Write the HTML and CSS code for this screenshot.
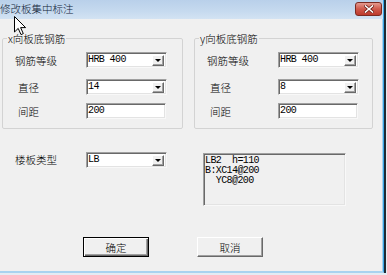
FILE: index.html
```html
<!DOCTYPE html>
<html lang="zh-CN">
<head>
  <meta charset="UTF-8">
  <meta name="viewport" content="width=device-width, initial-scale=1.0">
  <title>修改板集中标注</title>
  <link rel="stylesheet" href="styles.css">
</head>
<body>
  <div class="window">
    <header class="titlebar">
      <span class="title">修改板集中标注</span>
      <button class="close" aria-label="关闭">
        <svg width="10" height="8" viewBox="0 0 10 8">
          <path d="M1.5 1 L8.5 7 M8.5 1 L1.5 7" stroke="#6b1c14" stroke-width="3" stroke-linecap="square"/>
          <path d="M1.5 1 L8.5 7 M8.5 1 L1.5 7" stroke="#fff" stroke-width="1.6" stroke-linecap="square"/>
        </svg>
      </button>
    </header>

    <main class="client">
      <div class="groups">
        <fieldset class="group">
          <legend>x向板底钢筋</legend>
          <div class="row row-first">
            <span class="label">钢筋等级</span>
            <div class="combo"><span class="value">HRB 400</span><i class="drop"></i></div>
          </div>
          <div class="row row-second">
            <span class="label indent">直径</span>
            <div class="combo"><span class="value">14</span><i class="drop"></i></div>
          </div>
          <div class="row row-third">
            <span class="label indent">间距</span>
            <div class="field"><span class="value">200</span></div>
          </div>
        </fieldset>

        <fieldset class="group">
          <legend>y向板底钢筋</legend>
          <div class="row row-first">
            <span class="label">钢筋等级</span>
            <div class="combo"><span class="value">HRB 400</span><i class="drop"></i></div>
          </div>
          <div class="row row-second">
            <span class="label indent">直径</span>
            <div class="combo"><span class="value">8</span><i class="drop"></i></div>
          </div>
          <div class="row row-third">
            <span class="label indent">间距</span>
            <div class="field"><span class="value">200</span></div>
          </div>
        </fieldset>
      </div>

      <div class="slab">
        <span class="label">楼板类型</span>
        <div class="combo"><span class="value">LB</span><i class="drop"></i></div>
        <div class="memo">LB2  h=110
B:XC14@200
  YC8@200</div>
      </div>

      <div class="actions">
        <button class="btn btn-default">确定</button>
        <button class="btn">取消</button>
      </div>
    </main>

    <!-- mouse pointer over the dialog -->
    <svg class="cursor" width="13" height="20" viewBox="0 0 13 20">
      <path d="M0.5 0.5 L0.5 16 L4.2 12.4 L7 18.6 L9.3 17.6 L6.6 11.6 L11.6 11.6 Z" fill="#fff" stroke="#000" stroke-width="1"/>
    </svg>
  </div>
</body>
</html>
```

FILE: styles.css
```css
body {
  margin: 0;
  background-color: #e4ecf3;
  font-family: "Noto Sans CJK SC", "Liberation Sans", sans-serif;
  font-size: 10.5px;
  font-weight: 300;
  color: #000;
}

.window {
  position: relative;
  width: 383px;
  height: 271px;
  background-color: #f0f0f0;
  border-right: 1px solid #3aa6e6;
  border-bottom: 2px solid #a9d3ef;
  box-shadow: inset -1px 0 #a9d3ef, 2px 0 0 #1d2b35;
  display: flex;
  flex-direction: column;
}

/* title bar */
.titlebar {
  height: 19px;
  flex: none;
  display: flex;
  align-items: center;
  justify-content: space-between;
  background: linear-gradient(#b9d0ea, #c6daef 60%, #d3e3f3);
}

.title {
  font-size: 10.5px;
  line-height: 13px;
  color: #10243a;
  margin-top: -2px;
}

.close {
  width: 27px;
  height: 14px;
  margin-right: 1px;
  margin-top: -2px;
  padding: 0;
  border: 1px solid #7c2b22;
  border-radius: 3px;
  background: linear-gradient(#e49a8f, #d0594b 50%, #bc3a2c);
  display: flex;
  align-items: center;
  justify-content: center;
}

/* client area */
.client {
  flex: 1;
  padding: 13px 0 0 2px;
  border-right: 1px solid #a9d3ef;
}

.groups {
  display: flex;
  gap: 11px;
}

.group {
  margin: 0;
  padding: 0 0 9px 12px;
  border: 1px solid #d3d3d3;
  border-radius: 2px;
  width: 179px;
  box-sizing: border-box;
  min-width: 0;
}

.group:first-child {
  width: 181px;
}

.group legend {
  margin-left: -8px;
  padding: 0 1px;
  font-size: 10.5px;
  line-height: 13px;
}

.row {
  display: flex;
  align-items: center;
  height: 16px;
}

.row-first {
  margin-top: 7px;
}

.row-second {
  margin-top: 11px;
}

.row-third {
  margin-top: 8px;
}

.label {
  width: 71px;
  flex: none;
  line-height: 13px;
}

.label.indent {
  width: 68px;
  padding-left: 3px;
}

/* sunken edit / combo boxes */
.combo, .field, .memo {
  box-sizing: border-box;
  border: 1px solid;
  border-color: #a0a0a0 #f8f8f8 #f8f8f8 #a0a0a0;
  box-shadow: inset 1px 1px #696969, inset -1px -1px #e3e3e3;
}

.combo, .field {
  width: 81px;
  height: 16px;
  background-color: #fff;
  display: flex;
  align-items: center;
  justify-content: space-between;
}

.field {
  width: 80px;
}

.value {
  font-family: "Liberation Mono", monospace;
  font-size: 10px;
  font-weight: 400;
  letter-spacing: -0.6px;
  padding-left: 1px;
  line-height: 12px;
}

.drop {
  width: 12px;
  height: 11px;
  margin-right: 2px;
  box-sizing: border-box;
  background-color: #f0f0f0;
  border: 1px solid;
  border-color: #fff #696969 #696969 #fff;
  box-shadow: inset -1px -1px #a0a0a0;
  display: flex;
  align-items: center;
  justify-content: center;
}

.drop::after {
  content: "";
  border-left: 3px solid transparent;
  border-right: 3px solid transparent;
  border-top: 3px solid #000;
  margin-left: -1px;
}

/* slab type row */
.slab {
  display: flex;
  align-items: flex-start;
  margin-top: 23px;
  padding-left: 13px;
}

.slab .label {
  margin-top: 1px;
}

.slab .memo {
  width: 143px;
  height: 53px;
  margin-left: 36px;
  margin-top: 1px;
  padding: 2px 0 0 1px;
  background-color: #f0f0f0;
  white-space: pre;
  font-family: "Liberation Mono", monospace;
  font-size: 10px;
  font-weight: 400;
  letter-spacing: -0.6px;
  line-height: 10px;
}

/* buttons */
.actions {
  display: flex;
  gap: 48px;
  margin-top: 31px;
  padding-left: 81px;
}

.btn {
  width: 66px;
  height: 20px;
  padding: 0;
  font-family: "Noto Sans CJK SC", sans-serif;
  font-size: 10.5px;
  font-weight: 300;
  line-height: 13px;
  color: #000;
  background-color: #f0f0f0;
  border: 1px solid;
  border-color: #fff #696969 #696969 #fff;
  box-shadow: inset -1px -1px #a0a0a0;
}

.btn-default {
  border-color: #000;
  box-shadow: inset 1px 1px #fff, inset -1px -1px #696969, inset -2px -2px #a0a0a0;
}

.cursor {
  position: absolute;
  left: 14px;
  top: 16px;
}
```
